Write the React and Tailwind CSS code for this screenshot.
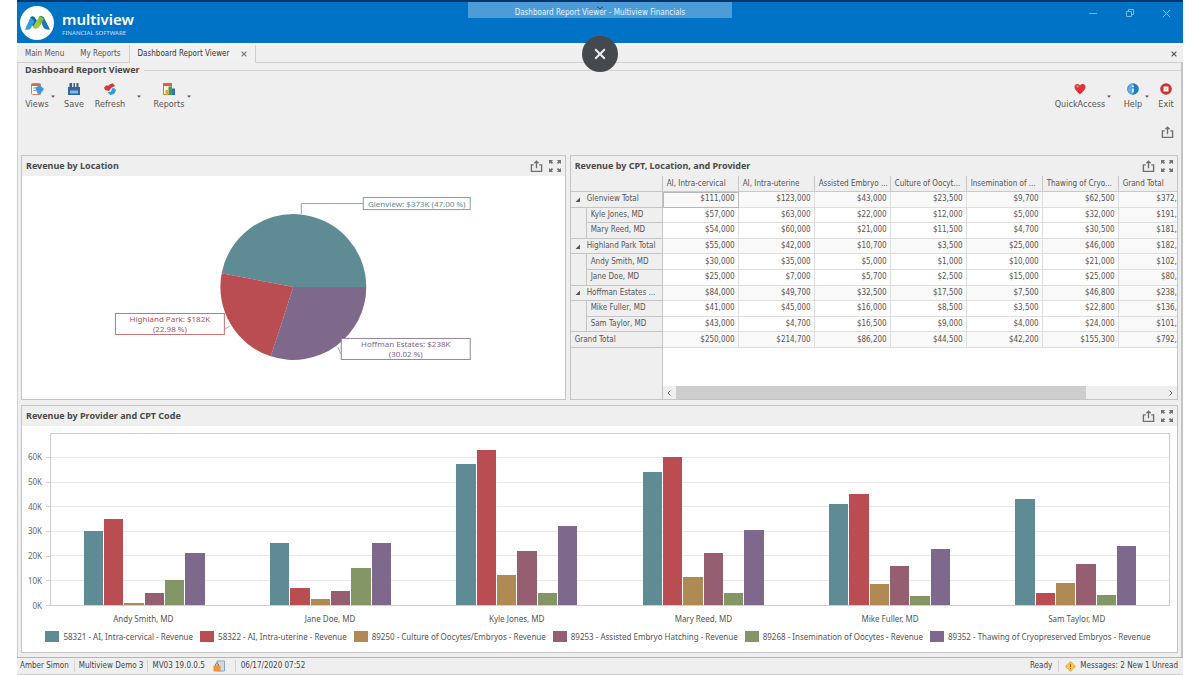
import React from "react";

const SERIES = [
  { name: "58321 - AI, Intra-cervical - Revenue", bg: "bg-[#5f8b95]" },
  { name: "58322 - AI, Intra-uterine - Revenue", bg: "bg-[#ba4d51]" },
  { name: "89250 - Culture of Oocytes/Embryos - Revenue", bg: "bg-[#af8a53]" },
  { name: "89253 - Assisted Embryo Hatching - Revenue", bg: "bg-[#955f71]" },
  { name: "89268 - Insemination of Oocytes - Revenue", bg: "bg-[#859666]" },
  { name: "89352 - Thawing of Cryopreserved Embryos - Revenue", bg: "bg-[#7e688c]" },
];

const PROVIDERS = [
  { name: "Andy Smith, MD", values: [30, 35, 1, 5, 10, 21] },
  { name: "Jane Doe, MD", values: [25, 7, 2.5, 5.7, 15, 25] },
  { name: "Kyle Jones, MD", values: [57, 63, 12, 22, 5, 32] },
  { name: "Mary Reed, MD", values: [54, 60, 11.5, 21, 4.7, 30.5] },
  { name: "Mike Fuller, MD", values: [41, 45, 8.5, 16, 3.5, 22.8] },
  { name: "Sam Taylor, MD", values: [43, 4.7, 9, 16.5, 4, 24] },
];

const AXIS_MAX = 69.3;
const TICKS = ["60K", "50K", "40K", "30K", "20K", "10K", "0K"];

const COLUMNS = [
  "AI, Intra-cervical",
  "AI, Intra-uterine",
  "Assisted Embryo ...",
  "Culture of Oocyt...",
  "Insemination of ...",
  "Thawing of Cryo...",
  "Grand Total",
];

const ROWS = [
  { kind: "group", name: "Glenview Total", cells: ["$111,000", "$123,000", "$43,000", "$23,500", "$9,700", "$62,500", "$372,700"] },
  { kind: "item", name: "Kyle Jones, MD", cells: ["$57,000", "$63,000", "$22,000", "$12,000", "$5,000", "$32,000", "$191,000"] },
  { kind: "item", name: "Mary Reed, MD", last: true, cells: ["$54,000", "$60,000", "$21,000", "$11,500", "$4,700", "$30,500", "$181,700"] },
  { kind: "group", name: "Highland Park Total", cells: ["$55,000", "$42,000", "$10,700", "$3,500", "$25,000", "$46,000", "$182,200"] },
  { kind: "item", name: "Andy Smith, MD", cells: ["$30,000", "$35,000", "$5,000", "$1,000", "$10,000", "$21,000", "$102,000"] },
  { kind: "item", name: "Jane Doe, MD", last: true, cells: ["$25,000", "$7,000", "$5,700", "$2,500", "$15,000", "$25,000", "$80,200"] },
  { kind: "group", name: "Hoffman Estates ...", cells: ["$84,000", "$49,700", "$32,500", "$17,500", "$7,500", "$46,800", "$238,000"] },
  { kind: "item", name: "Mike Fuller, MD", cells: ["$41,000", "$45,000", "$16,000", "$8,500", "$3,500", "$22,800", "$136,800"] },
  { kind: "item", name: "Sam Taylor, MD", last: true, cells: ["$43,000", "$4,700", "$16,500", "$9,000", "$4,000", "$24,000", "$101,200"] },
  { kind: "total", name: "Grand Total", cells: ["$250,000", "$214,700", "$86,200", "$44,500", "$42,200", "$155,300", "$792,900"] },
];

function ShareIcon() {
  return (
    <svg width="13" height="13" viewBox="0 0 14 14" fill="none" stroke="#707070" strokeWidth="1.5">
      <path d="M4 5.2H1.5v7h11v-7H10M7 9V1.5M4.8 3.6 7 1.4l2.2 2.2" />
    </svg>
  );
}

function ExpandIcon() {
  return (
    <svg width="12" height="12" viewBox="0 0 12 12" fill="#737373">
      <path d="M0 0h4L2.9 1.4 4.2 2.7 2.9 4 1.5 2.7 0 4zM12 0v4l-1.5-1.3L9.1 4 7.8 2.7l1.3-1.3L8 0zM0 12V8l1.5 1.3L2.9 8l1.3 1.3-1.3 1.3L4 12zM12 12H8l1.1-1.4-1.3-1.3L9.1 8l1.4 1.3L12 8z" />
    </svg>
  );
}

function CrossIcon({ size, color, width }) {
  return (
    <svg width={size} height={size} viewBox="0 0 10 10" fill="none" stroke={color} strokeWidth={width}>
      <path d="M1 1l8 8M9 1 1 9" />
    </svg>
  );
}

function Caret({ label }) {
  return (
    <button type="button" aria-label={label} className="flex h-7 w-1 items-center justify-center">
      <svg width="4" height="3" viewBox="0 0 4 3" className="shrink-0">
        <path d="M0 .4h4L2 2.8z" fill="#555" />
      </svg>
    </button>
  );
}

function Tool({ label, width, children }) {
  return (
    <button type="button" className={`flex flex-col items-center gap-[2px] whitespace-nowrap ${width}`}>
      <svg width="14" height="14" viewBox="0 0 14 14">
        {children}
      </svg>
      <span className="leading-[12px]">{label}</span>
    </button>
  );
}

function Logo() {
  return (
    <div className="flex items-center gap-2">
      <svg width="34" height="34" viewBox="0 0 34 34">
        <circle cx="17" cy="17" r="17" fill="#fff" />
        <path d="M10.500 11.200q1.800-2 4-.2L19 18l-3 4.500q-1.500.4-2.500-1.200L9.500 15z" fill="#1668a8" />
        <path d="M5 23.500 10.500 11.200l3.800 4.200-3.300 6.500q-1.700 2.500-6 1.600z" fill="#2fa0d8" />
        <path d="M13 20.800 19 10.800q2.300-1.900 4.500.9L19.500 20.500q-1 2-3.300 2.100-2 .2-3.200-1.800z" fill="#a3c93a" />
        <path d="M19.300 10.700q2.600-1.800 4.600.8L30 23.500q-5 .7-6.500-2L20.500 15z" fill="#1979b8" />
        <path d="M20 10.300 23.800 12.500l-3.300 6.700-2-5.200z" fill="#86bd3c" />
      </svg>
      <div className="flex flex-col text-white">
        <span className="font-['Noto_Sans'] text-[15px] leading-[20px] font-semibold">multiview</span>
        <span className="font-['Noto_Sans'] text-[6px] leading-[8px] font-medium text-[#b5d7f1]">FINANCIAL SOFTWARE</span>
      </div>
    </div>
  );
}

function TitleBar() {
  return (
    <header className="relative flex h-[43px] items-center justify-between border-t-2 border-[#00366a] bg-[#0173c7] pr-3 pl-[3px]">
      <Logo />
      <div className="absolute top-0 left-1/2 flex h-4 w-[264px] -translate-x-1/2 items-end justify-center bg-[#4b9cd9] text-[8px] leading-[10px] text-[#e6f2fb]">
        <svg width="8" height="4" viewBox="0 0 8 4" fill="none" stroke="#1a4f80" className="absolute top-1">
          <path d="M1 .5 4 3 7 .5" />
        </svg>
        <span>Dashboard Report Viewer - Multiview Financials</span>
      </div>
      <div className="flex items-center gap-[27px] self-start pt-[6px]">
        <button type="button" aria-label="Minimize">
          <svg width="10" height="10" viewBox="0 0 10 10" stroke="#79b4e2"><path d="M1 5.500h8" /></svg>
        </button>
        <button type="button" aria-label="Restore">
          <svg width="10" height="10" viewBox="0 0 10 10" fill="none" stroke="#79b4e2"><path d="M1.500 3.500h5v5h-5zM3.500 3.500v-2h5v5h-2" /></svg>
        </button>
        <button type="button" aria-label="Close window">
          <CrossIcon size={9} color="#8cc0e8" width={1.1} />
        </button>
      </div>
      <button type="button" aria-label="Close" className="absolute top-[34px] left-1/2 z-10 flex size-9 -translate-x-1/2 items-center justify-center rounded-full bg-[#45484d]">
        <CrossIcon size={12} color="#f2f2f2" width={1.6} />
      </button>
    </header>
  );
}

function Tabs() {
  return (
    <nav className="flex h-5 border-t-2 border-[#fafafa] text-[8px]">
      <a href="#main" className="flex items-center border-b border-[#cfcfcf] px-2">Main Menu</a>
      <a href="#reports" className="flex items-center border-r border-b border-[#cfcfcf] px-2">My Reports</a>
      <div className="flex items-center gap-3 border-r border-[#cfcfcf] bg-[#f1f1f1] px-2 text-[#333]">
        <a href="#viewer">Dashboard Report Viewer</a>
        <button type="button" aria-label="Close tab"><CrossIcon size={6} color="#777" width={2} /></button>
      </div>
      <div className="flex flex-1 items-center justify-end border-b border-[#cfcfcf] pr-[6px]">
        <button type="button" aria-label="Close all tabs"><CrossIcon size={6} color="#555" width={2} /></button>
      </div>
    </nav>
  );
}

function Toolbar() {
  return (
    <div className="flex justify-between pr-[7px] pl-[5px] text-[9px]">
      <div className="flex">
        <Tool label="Views" width="w-7">
          <rect x="1.500" y="1.500" width="9" height="11" rx="1" fill="#fff" stroke="#d9795f" />
          <path d="M1.500 3h9" stroke="#d9694f" strokeWidth="2" />
          <path d="M5 5.500 10 3.500l4 3.500-4 5.500-2.500-1z" fill="#3b98d8" />
          <path d="M3 6h2M3 8.500h3" stroke="#8aa7c0" />
        </Tool>
        <Caret label="Views options" />
        <div className="ml-[7px] flex">
          <Tool label="Save" width="w-6">
            <path d="M1 5h12v8H1z" fill="#2b66a8" />
            <path d="M2.500 1h9v6h-9z" fill="#3f5e86" />
            <path d="M5 1h1.500v4H5zM8 1h1.500v4H8z" fill="#dce8f2" />
            <path d="M3 8.500h8v3H3z" fill="#86b5df" />
          </Tool>
        </div>
        <div className="ml-2 flex">
          <Tool label="Refresh" width="w-8">
            <path d="M1 5.500 4 3l1 1q2-3 5-2.500L12 4 8 6 6 9 2 8z" fill="#d8363f" />
            <path d="M13 8.500 11 12 7.500 13 4.500 10.500 8 9.500 9.500 6l2.500.5z" fill="#2f9bd8" />
          </Tool>
        </div>
        <div className="ml-[11px] flex">
          <Caret label="Refresh options" />
        </div>
        <div className="ml-[10px] flex">
          <Tool label="Reports" width="w-9">
            <path d="M1.500 1.500h8v11h-8z" fill="#fff3dd" stroke="#d8763d" />
            <path d="M1 1h9v3H1z" fill="#d9673a" />
            <path d="M3.500 8h2.500v5H3.500z" fill="#e8a33c" />
            <path d="M6.500 4.500h3V13h-3z" fill="#3f9d3c" />
            <path d="M10 6.500h3V13h-3z" fill="#2e6fb6" />
          </Tool>
          <Caret label="Reports options" />
        </div>
      </div>
      <div className="flex">
        <Tool label="QuickAccess" width="w-[54px]">
          <path d="M7 12.500C3 9 1.500 7 1.500 4.800 1.500 2 5 1 7 3.600 9 1 12.500 2 12.500 4.800 12.500 7 11 9 7 12.500z" fill="#e0343a" />
          <path d="M3 4.500q1-2 3-.8L5 6z" fill="#f08a7c" />
        </Tool>
        <Caret label="QuickAccess options" />
        <div className="ml-[10px] flex">
          <Tool label="Help" width="w-6">
            <circle cx="7" cy="7" r="5.800" fill="#2379c6" />
            <path d="M2.500 4.500Q5 .8 7.500 2L6 6l1 6Q3 12 1.800 8.500z" fill="#5db0ea" />
            <path d="M7 3.500v1.800M7 6.500v4" stroke="#fff" strokeWidth="1.600" />
          </Tool>
          <Caret label="Help options" />
        </div>
        <div className="ml-[9px] flex">
          <Tool label="Exit" width="w-4">
            <circle cx="7" cy="7" r="5.800" fill="#cf3034" />
            <path d="M4.500 4.500h5v5h-5z" fill="#fff" />
            <path d="M6.200 6.200h1.600v1.600H6.200z" fill="#f0b9ba" />
          </Tool>
        </div>
      </div>
    </div>
  );
}

function Panel({ title, className, children }) {
  return (
    <section className={`flex min-w-0 flex-col border border-[#c4c4c4] bg-white ${className}`}>
      <div className="flex h-5 shrink-0 items-center justify-between bg-[#efefef] px-1">
        <h2 className="font-['Noto_Sans'] text-[9px] font-bold text-[#4a4a4a]">{title}</h2>
        <div className="flex items-center gap-[6px]">
          <button type="button" aria-label="Export"><ShareIcon /></button>
          <button type="button" aria-label="Maximize"><ExpandIcon /></button>
        </div>
      </div>
      {children}
    </section>
  );
}

function PieChart() {
  return (
    <div className="flex flex-1 items-center justify-center">
      <svg width="543" height="223" viewBox="21 176 543 223">
        <path d="M292.500 287H365.500A73 73 0 0 0 220.800 273.300z" fill="#5f8b95" />
        <path d="M292.500 287 220.800 273.300A73 73 0 0 0 270 356.400z" fill="#ba4d51" />
        <path d="M292.500 287 270 356.400A73 73 0 0 0 365.500 287z" fill="#7e688c" />
        <path d="M300.500 214v-10.500h62" fill="none" stroke="#8ba7ae" />
        <path d="M223 330l6-4" stroke="#ba4d51" opacity=".6" />
        <path d="M337 347l3 7" stroke="#7e688c" opacity=".6" />
        <rect x="362.500" y="197.500" width="107" height="12" fill="#fff" stroke="#7fa0a8" />
        <rect x="114.500" y="313.500" width="109" height="21" fill="#fff" stroke="#c97276" />
        <rect x="340.500" y="338.500" width="129" height="21" fill="#fff" stroke="#94839f" />
        <g textAnchor="middle" fontSize="8" fontFamily="Noto Sans, sans-serif">
          <text x="416" y="207" fill="#5f8b95">Glenview: $373K (47.00 %)</text>
          <text x="169" y="322" fill="#ba4d51">Highland Park: $182K</text>
          <text x="169" y="332" fill="#ba4d51">(22.98 %)</text>
          <text x="405" y="347" fill="#7e688c">Hoffman Estates: $238K</text>
          <text x="405" y="357" fill="#7e688c">(30.02 %)</text>
        </g>
      </svg>
    </div>
  );
}

function PivotRow({ row, first }) {
  const isItem = row.kind === "item";
  const cellBg = isItem ? "" : "bg-[#f9f9f9]";
  return (
    <tr>
      {isItem ? (
        <>
          <td className={`border-r border-[#c4c4c4] bg-[#efefef] ${row.last ? "border-b" : ""}`} />
          <th scope="row" className="border-r border-b border-[#c4c4c4] bg-[#efefef] pl-1 text-left font-normal">{row.name}</th>
        </>
      ) : (
        <th scope="row" colSpan={2} className="border-r border-b border-[#c4c4c4] bg-[#efefef] pl-1 text-left font-normal">
          <span className="flex items-center gap-[6px]">
            {row.kind === "group" && (
              <svg width="6" height="5" viewBox="0 0 6 5" className="shrink-0"><path d="M5 .5V5H.5z" fill="#555" /></svg>
            )}
            {row.name}
          </span>
        </th>
      )}
      {row.cells.map((cell, i) => (
        <td
          key={i}
          className={`border-r border-b pr-[3px] text-right ${first && i === 0 ? "border-[#b0b0b0] outline -outline-offset-1 outline-[#b8b8b8]" : "border-[#dedede]"} ${i === 6 ? "bg-[#f9f9f9]" : cellBg}`}
        >
          {cell}
        </td>
      ))}
    </tr>
  );
}

function PivotTable() {
  return (
    <div className="flex flex-1 flex-col overflow-hidden">
      <div className="overflow-hidden">
        <table className="h-[172px] w-[624px] table-fixed border-separate border-spacing-0 text-[8px] leading-[10px] whitespace-nowrap">
          <colgroup>
            <col className="w-4" />
            <col className="w-[76px]" />
            {COLUMNS.map((c) => <col key={c} className="w-[76px]" />)}
          </colgroup>
          <thead>
            <tr className="h-4 bg-[#efefef]">
              <td colSpan={2} className="border-r border-b border-[#c4c4c4]" />
              {COLUMNS.map((c) => (
                <th key={c} scope="col" className="border-r border-b border-[#c9c9c9] pl-1 text-left font-normal">{c}</th>
              ))}
            </tr>
          </thead>
          <tbody>
            {ROWS.map((row, i) => <PivotRow key={row.name} row={row} first={i === 0} />)}
          </tbody>
        </table>
      </div>
      <div className="flex flex-1">
        <div className="w-[92px] shrink-0 border-r border-[#c4c4c4] bg-[#efefef]" />
        <div className="flex flex-1 flex-col justify-end">
          <div className="flex h-[13px] items-center bg-[#efefef]">
            <button type="button" aria-label="Scroll left" className="flex w-[13px] justify-center">
              <svg width="4" height="6" viewBox="0 0 4 6" fill="none" stroke="#666"><path d="M3.500.5 1 3l2.500 2.500" /></svg>
            </button>
            <div className="flex h-full flex-1"><div className="w-[84%] bg-[#cdcdcd]" /></div>
            <button type="button" aria-label="Scroll right" className="flex w-[13px] justify-center">
              <svg width="4" height="6" viewBox="0 0 4 6" fill="none" stroke="#666"><path d="M.5.5 3 3 .5 5.500" /></svg>
            </button>
          </div>
        </div>
      </div>
    </div>
  );
}

function BarChart() {
  return (
    <div className="flex flex-1 flex-col pt-[7px] pr-[7px] pb-[10px] pl-1 font-['Noto_Sans'] text-[8px] leading-[10px]">
      <div className="flex h-[173px]">
        <div className="flex w-5 flex-col justify-between pt-[24px] text-[#666]">
          {TICKS.map((t) => (
            <span key={t} className="flex h-0 items-center justify-end pr-1">{t}</span>
          ))}
        </div>
        <div className="flex w-1 flex-col justify-between pt-[24px]">
          {TICKS.map((t) => <span key={t} className="h-px bg-[#cfcfcf]" />)}
        </div>
        <div className="relative flex flex-1 border border-[#cfcfcf]">
          <div className="absolute inset-x-0 top-[23px] bottom-0 flex flex-col justify-between">
            {TICKS.map((t) => <span key={t} className="h-px bg-[#e9e9e9] last:opacity-0" />)}
          </div>
          {PROVIDERS.map((p) => (
            <div key={p.name} className="relative flex flex-1 justify-center">
              <div className="flex w-[65%] items-end gap-px">
                {p.values.map((v, i) => (
                  <div key={i} className={`flex-1 ${SERIES[i].bg}`} style={{ height: `${(v / AXIS_MAX) * 100}%` }} />
                ))}
              </div>
            </div>
          ))}
        </div>
      </div>
      <div className="flex pt-2 pl-6 text-[#555]">
        {PROVIDERS.map((p) => <span key={p.name} className="flex-1 text-center">{p.name}</span>)}
      </div>
      <ul className="flex justify-center gap-[7px] pt-[7px] text-[#555]">
        {SERIES.map((s) => (
          <li key={s.name} className="flex items-center gap-1 whitespace-nowrap">
            <span className={`h-[11px] w-[14px] ${s.bg}`} />
            {s.name}
          </li>
        ))}
      </ul>
    </div>
  );
}

function StatusBar() {
  return (
    <footer className="flex h-[18px] items-center border-t border-b border-t-[#b5b5b5] border-b-[#cfcfcf] pr-[5px] pl-[3px] text-[8px] text-[#444]">
      <span className="border-r border-[#d2d2d2] pr-[5px]">Amber Simon</span>
      <span className="border-r border-[#d2d2d2] px-1">Multiview Demo 3</span>
      <span className="flex items-center gap-2 border-r border-[#d2d2d2] pr-[10px] pl-1">
        MV03 19.0.0.5
        <svg width="12" height="12" viewBox="0 0 12 12">
          <path d="M4 1h7.500v10H4z" fill="#cfdbe6" stroke="#8fa3b5" />
          <path d="M2.500 6V4q1.500-2.500 3 0v2" fill="none" stroke="#9a7442" />
          <path d="M.5 5.500h7v6h-7z" fill="#e8973a" />
        </svg>
      </span>
      <span className="pl-[5px]">06/17/2020 07:52</span>
      <span className="ml-auto border-r border-[#d2d2d2] pr-[6px]">Ready</span>
      <span className="flex items-center gap-1 pl-[6px]">
        <svg width="11" height="11" viewBox="0 0 11 11">
          <path d="M5.500 0 11 5.500 5.500 11 0 5.500z" fill="#efae2c" />
          <circle cx="5.500" cy="5.500" r="3.600" fill="#f6c544" />
          <path d="M5.500 3v3M5.500 7v1.200" stroke="#a4641c" />
        </svg>
        Messages: 2 New 1 Unread
      </span>
    </footer>
  );
}

export default function App() {
  return (
    <div className="min-h-screen bg-white px-[17px] font-['DejaVu_Sans_Condensed','DejaVu_Sans',sans-serif] text-[#555]">
      <div className="flex min-h-screen flex-col bg-[#efefef]">
        <TitleBar />
        <Tabs />
        <main className="flex flex-1 flex-col border-r-2 border-l border-r-[#c4c4c4] border-l-[#cfcfcf]">
          <div className="flex items-center gap-1 pl-[7px]">
            <h1 className="font-['Noto_Sans'] text-[9px] leading-[14px] font-bold text-[#4a4a4a]">Dashboard Report Viewer</h1>
            <div className="flex-1 border-t border-[#d2d2d2]" />
          </div>
          <div className="pt-[5px]">
            <Toolbar />
          </div>
          <div className="flex justify-end pt-4 pr-[7px] pb-4">
            <button type="button" aria-label="Export dashboard"><ShareIcon /></button>
          </div>
          <div className="flex gap-1 px-[3px]">
            <Panel title="Revenue by Location" className="h-[245px] flex-[545]"><PieChart /></Panel>
            <Panel title="Revenue by CPT, Location, and Provider" className="h-[245px] flex-[609]"><PivotTable /></Panel>
          </div>
          <div className="flex flex-1 px-[3px] pt-[5px] pb-1">
            <Panel title="Revenue by Provider and CPT Code" className="flex-1"><BarChart /></Panel>
          </div>
        </main>
        <StatusBar />
      </div>
    </div>
  );
}
